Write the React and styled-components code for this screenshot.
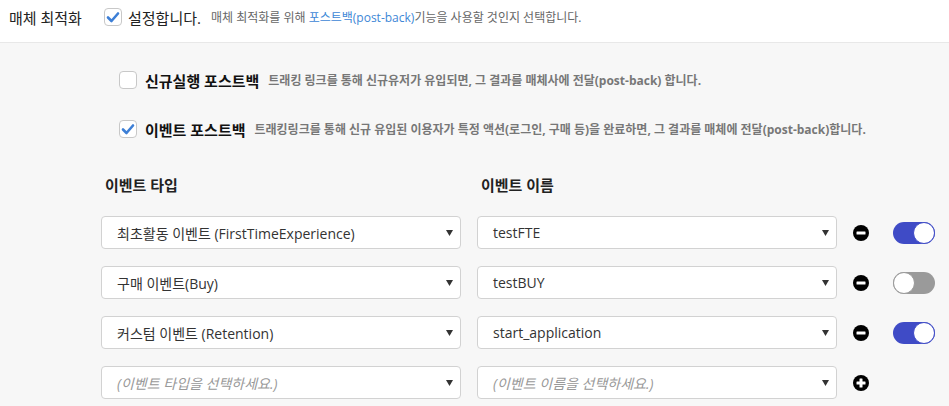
import styled, { createGlobalStyle } from "styled-components";

const GlobalStyle = createGlobalStyle`
  html, body {
    margin: 0;
    padding: 0;
    background: #f7f7f7;
    font-family: "Open Sans", "Noto Sans CJK KR", sans-serif;
    color: #222;
  }
`;

const rows = [
  { type: "최초활동 이벤트 (FirstTimeExperience)", name: "testFTE", on: true },
  { type: "구매 이벤트(Buy)", name: "testBUY", on: false },
  { type: "커스텀 이벤트 (Retention)", name: "start_application", on: true },
];

function Check({ checked }) {
  return (
    <Box>
      {checked && (
        <svg width="14" height="12" viewBox="0 0 14 12">
          <path
            d="M2 6.5 L5.5 10 L12 2.5"
            fill="none"
            stroke="#3d7fd6"
            strokeWidth="2.6"
            strokeLinecap="round"
            strokeLinejoin="round"
          />
        </svg>
      )}
    </Box>
  );
}

function Arrow() {
  return (
    <svg width="7" height="6" viewBox="0 0 7 6">
      <path d="M0 0 H7 L3.5 6 Z" fill="#333" />
    </svg>
  );
}

function RoundIcon({ plus }) {
  return (
    <svg width="16" height="16" viewBox="0 0 16 16">
      <circle cx="8" cy="8" r="8" fill="#000" />
      <rect x="3.5" y="6.5" width="9" height="3" rx="0.5" fill="#fff" />
      {plus && <rect x="6.5" y="3.5" width="3" height="9" rx="0.5" fill="#fff" />}
    </svg>
  );
}

export default function App() {
  return (
    <>
      <GlobalStyle />
      <TopRow>
        <Label>매체 최적화</Label>
        <Check checked />
        <SetText>설정합니다.</SetText>
        <Help>
          매체 최적화를 위해 <LinkText>포스트백(post-back)</LinkText>기능을 사용할 것인지 선택합니다.
        </Help>
      </TopRow>

      <Panel>
        <Option>
          <Check />
          <OptionTitle>신규실행 포스트백</OptionTitle>
          <OptionDesc>
            트래킹 링크를 통해 신규유저가 유입되면, 그 결과를 매체사에 전달(post-back) 합니다.
          </OptionDesc>
        </Option>
        <Option>
          <Check checked />
          <OptionTitle>이벤트 포스트백</OptionTitle>
          <OptionDesc>
            트래킹링크를 통해 신규 유입된 이용자가 특정 액션(로그인, 구매 등)을 완료하면, 그 결과를 매체에 전달(post-back)합니다.
          </OptionDesc>
        </Option>

        <Grid>
          <Heading>이벤트 타입</Heading>
          <Heading>이벤트 이름</Heading>
          <span />
          <span />

          {rows.map((r) => (
            <Row key={r.name}>
              <Select>
                <SelectText>{r.type}</SelectText>
                <Arrow />
              </Select>
              <Select>
                <SelectText>{r.name}</SelectText>
                <Arrow />
              </Select>
              <IconCell>
                <RoundIcon />
              </IconCell>
              <Toggle $on={r.on}>
                <Knob $on={r.on} />
              </Toggle>
            </Row>
          ))}

          <Row>
            <Select>
              <SelectText $placeholder>(이벤트 타입을 선택하세요.)</SelectText>
              <Arrow />
            </Select>
            <Select>
              <SelectText $placeholder>(이벤트 이름을 선택하세요.)</SelectText>
              <Arrow />
            </Select>
            <IconCell>
              <RoundIcon plus />
            </IconCell>
            <span />
          </Row>
        </Grid>
      </Panel>
    </>
  );
}

const TopRow = styled.div`
  display: flex;
  align-items: center;
  height: 43px;
  padding: 0 0 8px 9px;
  background: #fff;
  border-bottom: 1px solid #e8e8e8;
  box-sizing: border-box;
`;

const Label = styled.span`
  font-size: 15px;
  width: 95px;
`;

const Box = styled.span`
  display: inline-flex;
  align-items: center;
  justify-content: center;
  width: 18px;
  height: 18px;
  border: 1px solid #c8c8c8;
  border-radius: 4px;
  background: #fff;
  box-sizing: border-box;
  flex-shrink: 0;
`;

const SetText = styled.span`
  font-size: 15px;
  margin-left: 6px;
`;

const Help = styled.span`
  font-size: 12px;
  color: #666;
  margin-left: 10px;
`;

const LinkText = styled.span`
  color: #3d87d6;
`;

const Panel = styled.div`
  background: #f7f7f7;
  padding: 28px 0 0 119px;
`;

const Option = styled.div`
  display: flex;
  align-items: center;
  height: 18px;
  margin-bottom: 31px;
`;

const OptionTitle = styled.span`
  font-size: 15px;
  font-weight: 700;
  margin-left: 8px;
  color: #111;
`;

const OptionDesc = styled.span`
  font-size: 12px;
  font-weight: 700;
  color: #777;
  margin-left: 9px;
`;

const Grid = styled.div`
  display: grid;
  grid-template-columns: 360px 360px 24px 42px;
  column-gap: 16px;
  margin-left: -18px;
  margin-top: 37px;
  align-items: center;
`;

const Heading = styled.span`
  font-size: 15px;
  font-weight: 700;
  padding-left: 4px;
  height: 20px;
  line-height: 20px;
  margin-bottom: 21px;
`;

const Row = styled.div`
  display: contents;
`;

const Select = styled.div`
  display: flex;
  align-items: center;
  justify-content: space-between;
  height: 33px;
  margin-bottom: 17px;
  padding: 0 7px 0 15px;
  background: #fff;
  border: 1px solid #d2d2d2;
  border-radius: 4px;
  box-sizing: border-box;
`;

const SelectText = styled.span`
  font-size: 14px;
  color: ${(p) => (p.$placeholder ? "#999" : "#333")};
  font-style: ${(p) => (p.$placeholder ? "italic" : "normal")};
`;

const IconCell = styled.div`
  display: flex;
  align-items: center;
  height: 33px;
  margin-bottom: 17px;
`;

const Toggle = styled.div`
  position: relative;
  width: 42px;
  height: 22px;
  margin-bottom: 17px;
  border-radius: 11px;
  background: ${(p) => (p.$on ? "#3f4bc6" : "#9a9a9a")};
`;

const Knob = styled.div`
  position: absolute;
  top: 0;
  left: ${(p) => (p.$on ? "20px" : "0")};
  width: 22px;
  height: 22px;
  border-radius: 50%;
  background: #fff;
  border: 1px solid ${(p) => (p.$on ? "#3f4bc6" : "#9a9a9a")};
  box-sizing: border-box;
`;
